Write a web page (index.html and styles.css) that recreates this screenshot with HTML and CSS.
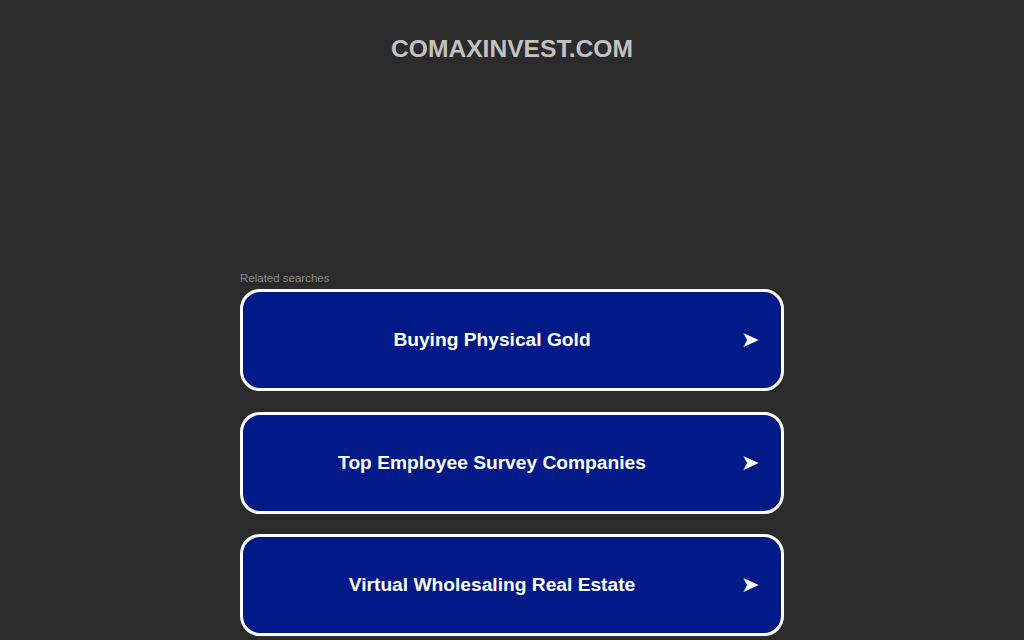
FILE: index.html
```html
<!DOCTYPE html>
<html>
<head>
<meta charset="utf-8">
<link rel="stylesheet" href="styles.css">
</head>
<body>
<header class="header">
  <h1 class="domain">COMAXINVEST.COM</h1>
</header>
<main class="content">
  <div class="related-label">Related searches</div>
  <a class="search-card" href="#"><span class="search-text">Buying Physical Gold</span><span class="search-arrow">➤</span></a>
  <a class="search-card" href="#"><span class="search-text">Top Employee Survey Companies</span><span class="search-arrow">➤</span></a>
  <a class="search-card" href="#"><span class="search-text">Virtual Wholesaling Real Estate</span><span class="search-arrow">➤</span></a>
</main>
</body>
</html>
```
FILE: styles.css
```css
html, body {
  margin: 0;
  padding: 0;
  background: #2b2b2b;
  font-family: "Liberation Sans", Arial, sans-serif;
  overflow: hidden;
}
.header {
  padding-top: 35px;
  height: 272px;
  box-sizing: border-box;
}
.domain {
  margin: 0;
  text-align: center;
  font-size: 24.6px;
  font-weight: bold;
  color: #c2c2c2;
  line-height: 28px;
}
.content {
  width: 544px;
  margin: 0 auto;
  display: flex;
  flex-direction: column;
}
.related-label {
  font-size: 11.5px;
  color: #8a8a8a;
  line-height: 13px;
  margin-bottom: 4px;
}
.search-card {
  display: flex;
  align-items: center;
  height: 102px;
  box-sizing: border-box;
  border: 3px solid #ffffff;
  border-radius: 20px;
  background: #011a87;
  color: #ffffff;
  text-decoration: none;
  margin-bottom: 20.5px;
}
.search-text {
  flex: 1;
  text-align: center;
  font-size: 19.2px;
  font-weight: bold;
}
.search-arrow {
  width: 40px;
  font-size: 22px;
  text-align: left;
}
```
